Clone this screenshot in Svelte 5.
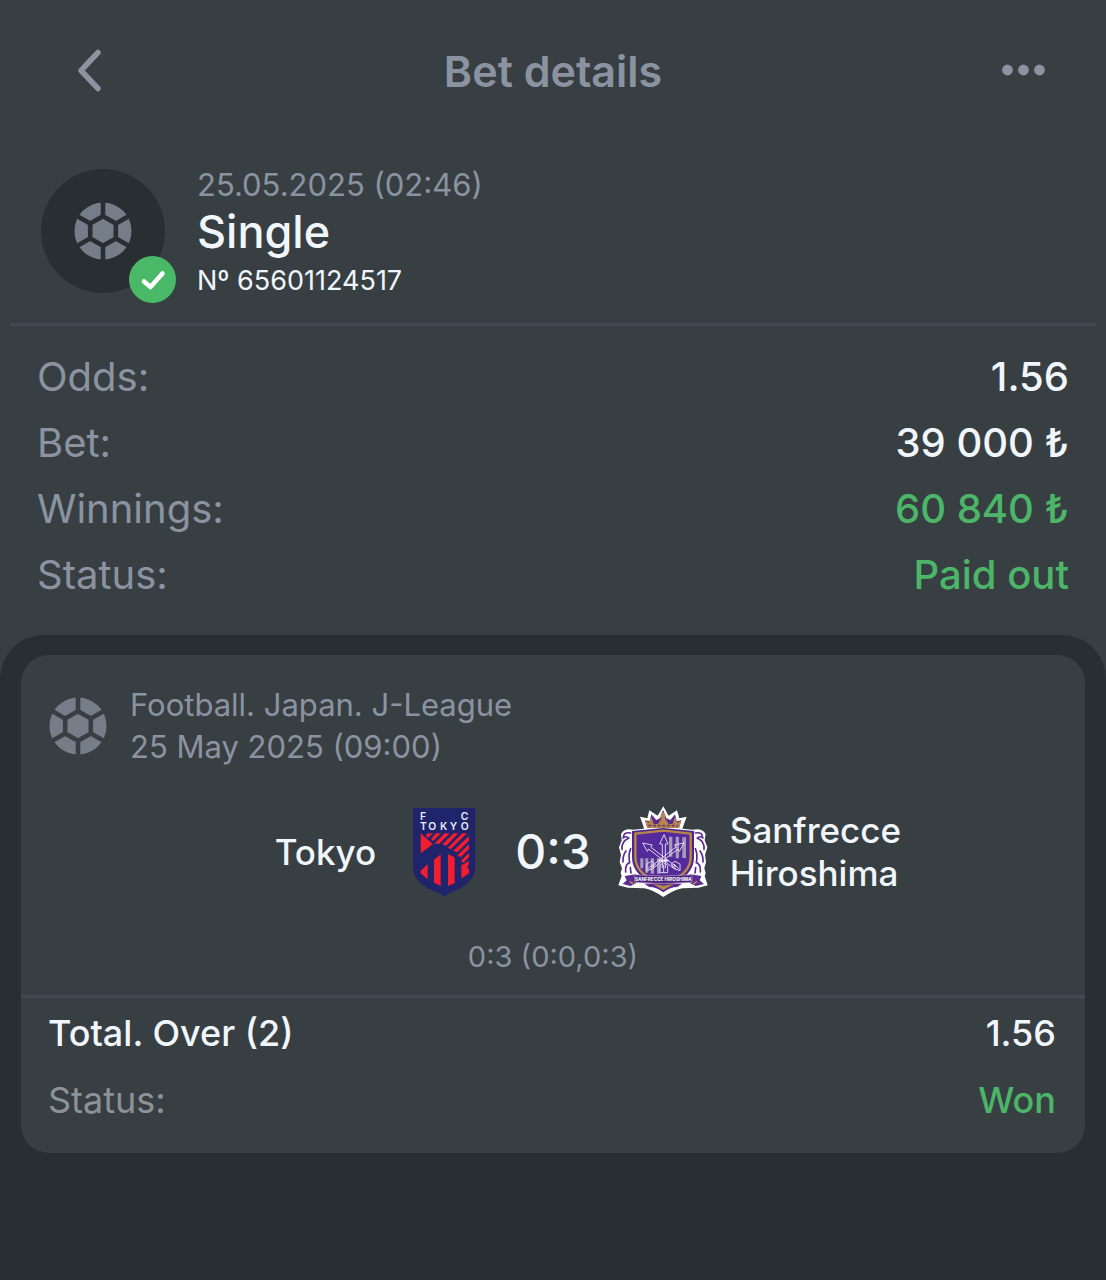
<script>
  // Bet details screen: the bet's summary on top, the event card below.
  const bet = {
    placed: '25.05.2025 (02:46)',
    type: 'Single',
    number: '65601124517',
  };

  const summary = [
    { label: 'Odds:', value: '1.56' },
    { label: 'Bet:', value: '39 000 ₺' },
    { label: 'Winnings:', value: '60 840 ₺', positive: true },
    { label: 'Status:', value: 'Paid out', positive: true },
  ];

  // Spokes of the ball icon, one per corner of the centre hexagon.
  const spokes = [0, 60, 120, 180, 240, 300];
</script>

{#snippet ball(id)}
  <svg class="ball" viewBox="0 0 58 58" aria-hidden="true">
    <mask {id}>
      <circle cx="29" cy="29" r="28.5" fill="#fff" />
      <g fill="none" stroke="#000" stroke-width="4.6" stroke-linejoin="round">
        <path d="M29 14.2 41.8 21.6V36.4L29 43.8 16.2 36.4V21.6Z" />
        {#each spokes as angle}
          <path d="M29 14V-2" transform="rotate({angle} 29 29)" />
        {/each}
      </g>
    </mask>
    <rect width="58" height="58" fill="currentColor" mask="url(#{id})" />
  </svg>
{/snippet}

<div class="screen">
  <header class="topbar">
    <button type="button" class="icon-btn" aria-label="Back">
      <svg width="28" height="46" viewBox="0 0 28 46" fill="none" stroke="currentColor" stroke-width="5.5" stroke-linecap="round" stroke-linejoin="round">
        <path d="M23 4.500 6 22.500 23 40.500" />
      </svg>
    </button>
    <h1>Bet details</h1>
    <button type="button" class="icon-btn more" aria-label="More">
      <svg width="44" height="14" viewBox="0 0 44 14" fill="currentColor">
        <circle cx="5.5" cy="6" r="5.4" />
        <circle cx="21.5" cy="6" r="5.4" />
        <circle cx="37.5" cy="6" r="5.4" />
      </svg>
    </button>
  </header>

  <section class="bet">
    <div class="avatar">
      {@render ball('ball-bet')}
      <span class="badge">
        <svg width="47" height="47" viewBox="0 0 47 47" fill="none" stroke="#fff" stroke-width="4.6" stroke-linecap="round" stroke-linejoin="round" role="img" aria-label="Won">
          <path d="M15 25.500 21.500 31 33.500 17.500" />
        </svg>
      </span>
    </div>
    <div class="bet-info">
      <p class="date">{bet.placed}</p>
      <h2>{bet.type}</h2>
      <p class="number">Nº {bet.number}</p>
    </div>
  </section>

  <dl class="summary">
    {#each summary as row}
      <div class="row">
        <dt>{row.label}</dt>
        <dd class:positive={row.positive}>{row.value}</dd>
      </div>
    {/each}
  </dl>

  <main class="events">
    <article class="card">
      <div class="league">
        {@render ball('ball-event')}
        <p>Football. Japan. J-League<br />25 May 2025 (09:00)</p>
      </div>

      <div class="match">
        <div class="team home">
          <span>Tokyo</span>
          <svg class="crest" viewBox="-7 42 270 270" role="img" aria-label="Tokyo crest">
            <path d="M38 45H225V222C225 260 192 282 161 295Q142 303 132 311Q122 303 103 295C70 282 38 260 38 222Z" fill="#20246a" />
            <g fill="#e9ebfa" font-family="Inter, sans-serif" font-size="31" font-weight="600">
              <text x="59" y="81">F</text>
              <text x="181" y="81">C</text>
              <text x="59" y="111">T</text>
              <text x="84" y="111">O</text>
              <text x="119" y="111">K</text>
              <text x="148" y="111">Y</text>
              <text x="181" y="111">O</text>
            </g>
            <g fill="#f21d2d">
              <path d="M61 121 98 153 61 181Z" />
              <path d="M82 121H98L84 134 76 128Z" />
              <path d="M107 121H122L99 144 92 138Z" />
              <path d="M133 121H148L117 152H102Z" />
              <path d="M160 121H174L138 158 126 154Z" />
              <path d="M186 121H200L151 169 142 164Z" />
              <path d="M206 129V143L171 178 158 173Z" />
              <path d="M206 154V168L181 193 171 187Z" />
              <path d="M206 179V193L189 210 182 203Z" />
              <path d="M183 217 206 204V211L199 228 206 224V241L183 257Z" />
              <path d="M82 214V259L61 241V233Z" />
              <path d="M101 200 121 184V278L101 269Z" />
              <path d="M143 183 163 193V270L143 279Z" />
            </g>
          </svg>
        </div>
        <strong class="score">0:3</strong>
        <div class="team away">
          <svg class="crest" viewBox="38 38 270 274" role="img" aria-label="Sanfrecce Hiroshima crest">
            <!-- white outline -->
            <path d="M174 38 190 66 215 50 222 74 244 69 235 94 231 105 263 108Q292 103 301 122L298 140 306 161 299 184 302 205 297 224 301 239 298 247 307 275 280 282 231 284Q208 288 174 310Q140 288 117 284L68 282 39 275 49 247 46 239 50 224 43 205 47 184 41 161 49 140 47 122Q55 103 84 108L116 105 113 94 104 69 126 74 132 50 157 66Z" fill="#fff" />
            <!-- crown -->
            <path d="M119 80 133 83 138 62 153 79 164 74 173 48 183 74 195 79 209 62 214 83 228 80 221 103H126Z" fill="#5a2b91" />
            <path d="M119 80 131 87 138 69 145 91 158 91 168 75 166 65 173 54 180 65 179 75 190 91 202 91 209 69 216 87 228 80 221 103H126Z" fill="#b68748" />
            <path d="M129 96H218" stroke="#6d3c78" stroke-width="5" stroke-dasharray="9 5" />
            <!-- side feathers -->
            <g fill="none" stroke="#5a2b91" stroke-width="5" stroke-linecap="round">
              <path d="M76 118Q54 114 54 132Q64 126 70 133Q47 145 50 167M53 205Q52 185 62 172M76 165Q68 184 73 207Q59 211 61 235M75 222 77 238" />
              <path d="M270 118Q292 114 292 132Q282 126 276 133Q299 145 296 167M293 205Q294 185 284 172M270 165Q278 184 273 207Q287 211 285 235M271 222 269 238" />
            </g>
            <!-- shield -->
            <path d="M80 112Q130 108 174 103Q218 108 266 112V190Q266 235 221 260L174 288 126 260Q80 235 80 190Z" fill="#4d278c" />
            <path d="M90 120Q133 115 174 111Q214 115 256 120V190Q256 229 216 252L174 277 131 252Q90 229 90 190Z" fill="#552a9b" stroke="#b68748" stroke-width="7" />
            <g fill="#a49bb9">
              <path d="M191 129H201V189H191ZM211 129H221V194H211ZM231 131H242V193H231Z" />
              <path d="M105 194H114V224H105ZM120 194H129V237H120ZM136 194H146V240H136ZM155 194H165V240H155Z" />
            </g>
            <!-- three crossed arrows -->
            <g fill="none" stroke="#ddd3eb" stroke-width="3" stroke-linejoin="round">
              <path d="M171 224V151H163L176 123 188 151H180V224" />
              <path d="M205 224 130 166 126 173 112 148 141 154 136 160 212 219" />
              <path d="M143 224 218 166 222 173 236 148 207 154 212 160 136 219" />
              <path d="M124 211 139 203 150 211 142 225 124 231ZM224 211 209 203 198 211 206 225 224 231ZM164 215 175 207 187 215V237H164Z" />
              <path d="M128 225 142 211M133 229 146 215M220 225 206 211M215 229 202 215M175 213V238" />
            </g>
            <path d="M161 201H189" stroke="#eee5fa" stroke-width="6" />
            <!-- ribbon -->
            <path d="M58 247 92 242V269L76 277 52 271 64 260ZM288 247 255 242V269L271 277 296 271 283 260Z" fill="#5a2b91" />
            <path d="M117 270 230 270 216 280Q195 280 174 296Q153 280 132 280Z" fill="#5a2b91" />
            <path d="M141 270 174 289 207 270 174 276Z" fill="#b68748" />
            <path d="M88 243Q174 251 260 243V266Q174 274 88 266Z" fill="#4d267f" stroke="#b69ac3" stroke-width="2" />
            <text x="174" y="262" text-anchor="middle" font-family="Inter, sans-serif" font-size="14" font-weight="700" fill="#fff">SANFRECCE HIROSHIMA</text>
            <path d="M73 263 84 271M275 263 264 271" stroke="#b68748" stroke-width="5" />
          </svg>
          <span>Sanfrecce Hiroshima</span>
        </div>
      </div>
      <p class="periods">0:3 (0:0,0:3)</p>

      <dl class="outcome">
        <div class="row pick">
          <dt>Total. Over (2)</dt>
          <dd>1.56</dd>
        </div>
        <div class="row">
          <dt>Status:</dt>
          <dd class="positive">Won</dd>
        </div>
      </dl>
    </article>
  </main>
</div>

<style>
  :global(body) {
    margin: 0;
    background-color: #282f32;
  }

  .screen {
    --surface: #383f43;
    --deep: #282f32;
    --line: #414853;
    --muted: #8c93a0;
    --text: #f0f6fb;
    --green: #4cb568;
    min-height: 100vh;
    display: flex;
    flex-direction: column;
    background-color: var(--surface);
    color: var(--text);
    font-family: Inter, 'Liberation Sans', sans-serif;
  }

  h1,
  h2,
  p,
  dl,
  dd {
    margin: 0;
  }

  .topbar {
    display: grid;
    grid-template-columns: 1fr auto 1fr;
    align-items: center;
    padding: 40px 60px 36px;
    color: var(--muted);
  }

  .topbar h1 {
    font-size: 43px;
    line-height: 62px;
    font-weight: 600;
  }

  .icon-btn {
    justify-self: start;
    display: flex;
    padding: 0 15px;
    border: none;
    background: none;
    color: inherit;
    cursor: pointer;
  }

  .more {
    justify-self: end;
    padding: 0;
  }

  .bet {
    display: flex;
    align-items: flex-start;
    gap: 32px;
    margin: 0 10px;
    padding: 27px 31px 20px;
    border-bottom: 3px solid var(--line);
  }

  .avatar {
    position: relative;
    display: grid;
    place-items: center;
    width: 124px;
    height: 124px;
    margin-top: 4px;
    border-radius: 50%;
    background-color: var(--deep);
  }

  .ball {
    flex: none;
    width: 58px;
    height: 58px;
    color: #757d89;
  }

  /* Result mark over the avatar's lower right edge. */
  .badge {
    position: absolute;
    right: -11px;
    bottom: -10px;
    display: flex;
    border-radius: 50%;
    background-color: #49b968;
  }

  .date {
    font-size: 31px;
    line-height: 40px;
    color: var(--muted);
  }

  .bet-info h2 {
    font-size: 45px;
    line-height: 54px;
    font-weight: 500;
  }

  .number {
    font-size: 27px;
    line-height: 44px;
  }

  .row {
    display: flex;
    justify-content: space-between;
  }

  .row dt {
    color: var(--muted);
  }

  .row dd {
    font-weight: 500;
  }

  .row .positive {
    color: var(--green);
  }

  .summary {
    padding: 18px 37px 27px;
    font-size: 40px;
    line-height: 66px;
  }

  .events {
    flex: 1;
    padding: 20px 21px;
    border-radius: 44px 44px 0 0;
    background-color: var(--deep);
  }

  .card {
    border-radius: 28px;
    background-color: var(--surface);
  }

  .league {
    display: flex;
    align-items: center;
    gap: 23px;
    padding: 29px 28px 0;
    font-size: 31px;
    line-height: 42px;
    color: var(--muted);
  }

  .match {
    display: grid;
    grid-template-columns: 1fr auto 1fr;
    align-items: center;
    gap: 27px;
    padding: 38px 28px 0;
  }

  .team {
    display: flex;
    align-items: center;
    gap: 22px;
    font-size: 35px;
    line-height: 43px;
    font-weight: 500;
  }

  .home {
    justify-content: flex-end;
  }

  .away span {
    max-width: 200px;
  }

  .crest {
    flex: none;
    width: 90px;
    height: 92px;
  }

  .score {
    font-size: 48px;
    line-height: 60px;
    font-weight: 500;
  }

  .periods {
    padding: 38px 28px 17px;
    font-size: 29px;
    line-height: 42px;
    text-align: center;
    color: var(--muted);
  }

  .outcome {
    padding: 2px 29px 19px 27px;
    border-top: 3px solid var(--line);
    font-size: 36px;
    line-height: 67px;
  }

  .outcome dt {
    color: #8c9297;
  }

  .outcome .pick dt {
    font-weight: 500;
    color: var(--text);
  }
</style>
